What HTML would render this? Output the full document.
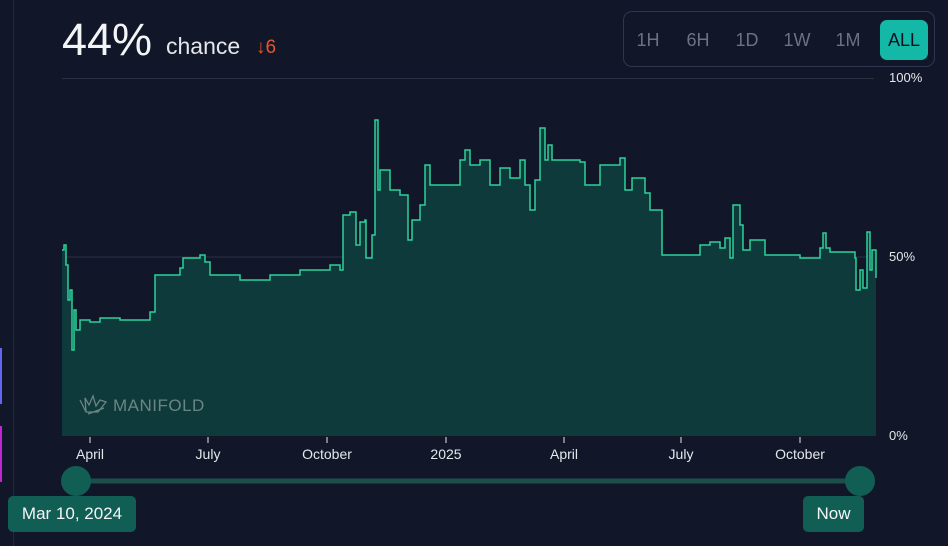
<!DOCTYPE html>
<html><head><meta charset="utf-8"><style>
body{margin:0;width:948px;height:546px;background:#111729;overflow:hidden;font-family:"Liberation Sans",sans-serif;position:relative;color:#e5e7eb}
.a{position:absolute}
.btn{position:absolute;top:20px;height:40px;line-height:40px;font-size:18px;color:#6b7280;text-align:center}
.xl{position:absolute;top:446px;font-size:14px;color:#e5e7eb;transform:translateX(-50%)}
.yl{position:absolute;left:889px;font-size:13px;color:#e5e7eb}
</style></head><body>
<div class="a" style="left:13px;top:0;width:1px;height:546px;background:#1f2a3a"></div>
<div class="a" style="left:0;top:348px;width:2px;height:56px;background:#6366f1"></div>
<div class="a" style="left:0;top:426px;width:2px;height:56px;background:#c026d3"></div>
<div class="a" style="left:62px;top:14px;font-size:45px;color:#f3f4f6;line-height:52px">44%</div>
<div class="a" style="left:166px;top:33px;font-size:23px;color:#e5e7eb">chance</div>
<div class="a" style="left:256px;top:37px;font-size:19px;color:#e4572e">↓6</div>
<div class="a" style="left:62px;top:78px;width:812px;height:1px;background:#2a3145"></div>
<div class="a" style="left:623px;top:11px;width:310px;height:54px;border:1px solid #2f3650;border-radius:9px"></div>
<div class="btn" style="left:630px;width:36px">1H</div>
<div class="btn" style="left:678px;width:40px">6H</div>
<div class="btn" style="left:728px;width:38px">1D</div>
<div class="btn" style="left:777px;width:40px">1W</div>
<div class="btn" style="left:828px;width:40px">1M</div>
<div class="btn" style="left:880px;width:48px;background:#14b8a6;color:#0b1220;border-radius:7px">ALL</div>
<svg class="a" style="left:0;top:0" width="948" height="546">
<defs><path id="ln" d="M62,250 H64 V245 H66 V265 H68 V300 H70 V290 H72 V350 H74 V310 H76 V330 H80 V320 H90 V322 H100 V318 H120 V320 H150 V312 H155 V275 H180 V268 H183 V258 H200 V255 H205 V262 H210 V275 H240 V280 H270 V275 H300 V270 H330 V265 H340 V270 H343 V215 H350 V212 H356 V245 H360 V222 H365 V220 H366 V258 H372 V235 H375 V120 H378 V190 H380 V170 H390 V190 H400 V195 H408 V240 H412 V220 H420 V205 H425 V165 H430 V185 H460 V160 H465 V150 H470 V165 H480 V160 H490 V185 H500 V168 H510 V178 H520 V160 H525 V185 H530 V210 H535 V180 H540 V128 H545 V160 H548 V145 H552 V160 H580 V162 H585 V185 H600 V165 H620 V158 H625 V190 H632 V178 H645 V193 H650 V210 H660 V210 H662 V255 H700 V245 H710 V242 H720 V248 H725 V238 H730 V258 H733 V205 H740 V225 H743 V250 H750 V240 H765 V255 H800 V258 H820 V248 H823 V233 H826 V248 H830 V252 H855 V258 H856 V290 H860 V270 H863 V288 H867 V232 H870 V270 H872 V250 H876 V278"/></defs>
<line x1="62" y1="257" x2="876" y2="257" stroke="#2a3145"/>
<path d="M62,436 V250 H64 V245 H66 V265 H68 V300 H70 V290 H72 V350 H74 V310 H76 V330 H80 V320 H90 V322 H100 V318 H120 V320 H150 V312 H155 V275 H180 V268 H183 V258 H200 V255 H205 V262 H210 V275 H240 V280 H270 V275 H300 V270 H330 V265 H340 V270 H343 V215 H350 V212 H356 V245 H360 V222 H365 V220 H366 V258 H372 V235 H375 V120 H378 V190 H380 V170 H390 V190 H400 V195 H408 V240 H412 V220 H420 V205 H425 V165 H430 V185 H460 V160 H465 V150 H470 V165 H480 V160 H490 V185 H500 V168 H510 V178 H520 V160 H525 V185 H530 V210 H535 V180 H540 V128 H545 V160 H548 V145 H552 V160 H580 V162 H585 V185 H600 V165 H620 V158 H625 V190 H632 V178 H645 V193 H650 V210 H660 V210 H662 V255 H700 V245 H710 V242 H720 V248 H725 V238 H730 V258 H733 V205 H740 V225 H743 V250 H750 V240 H765 V255 H800 V258 H820 V248 H823 V233 H826 V248 H830 V252 H855 V258 H856 V290 H860 V270 H863 V288 H867 V232 H870 V270 H872 V250 H876 V436 Z" fill="#0f3a3b"/>
<use href="#ln" fill="none" stroke="#2bd19b" stroke-width="1.5"/>
<g stroke="#e5e7eb" stroke-width="1"><line x1="90" y1="437" x2="90" y2="443"/><line x1="208" y1="437" x2="208" y2="443"/><line x1="327" y1="437" x2="327" y2="443"/><line x1="446" y1="437" x2="446" y2="443"/><line x1="564" y1="437" x2="564" y2="443"/><line x1="681" y1="437" x2="681" y2="443"/><line x1="800" y1="437" x2="800" y2="443"/></g>
<g fill="none" stroke="#6b8583" stroke-width="1.3"><path d="M80,400 L86,412 L98,412 L106,402 L100,400 L96,406 L93,396 L89,405 L85,398 L86,412 M88,414 L104,408"/></g>
<line x1="76" y1="481" x2="860" y2="481" stroke="#1c4f4a" stroke-width="5"/>
<circle cx="76" cy="481" r="15" fill="#115e55"/><circle cx="860" cy="481" r="15" fill="#115e55"/>
</svg>
<div class="a" style="left:113px;top:396px;font-size:17px;color:#6b8583;letter-spacing:0.5px">MANIFOLD</div>
<div class="yl" style="top:70px">100%</div>
<div class="yl" style="top:249px">50%</div>
<div class="yl" style="top:428px">0%</div>
<div class="xl" style="left:90px">April</div>
<div class="xl" style="left:208px">July</div>
<div class="xl" style="left:327px">October</div>
<div class="xl" style="left:446px">2025</div>
<div class="xl" style="left:564px">April</div>
<div class="xl" style="left:681px">July</div>
<div class="xl" style="left:800px">October</div>
<div class="a" style="left:8px;top:496px;width:128px;height:36px;line-height:36px;text-align:center;background:#115e55;border-radius:5px;font-size:17px;color:#f3f4f6">Mar 10, 2024</div>
<div class="a" style="left:803px;top:496px;width:61px;height:36px;line-height:36px;text-align:center;background:#115e55;border-radius:5px;font-size:17px;color:#f3f4f6">Now</div>
</body></html>
